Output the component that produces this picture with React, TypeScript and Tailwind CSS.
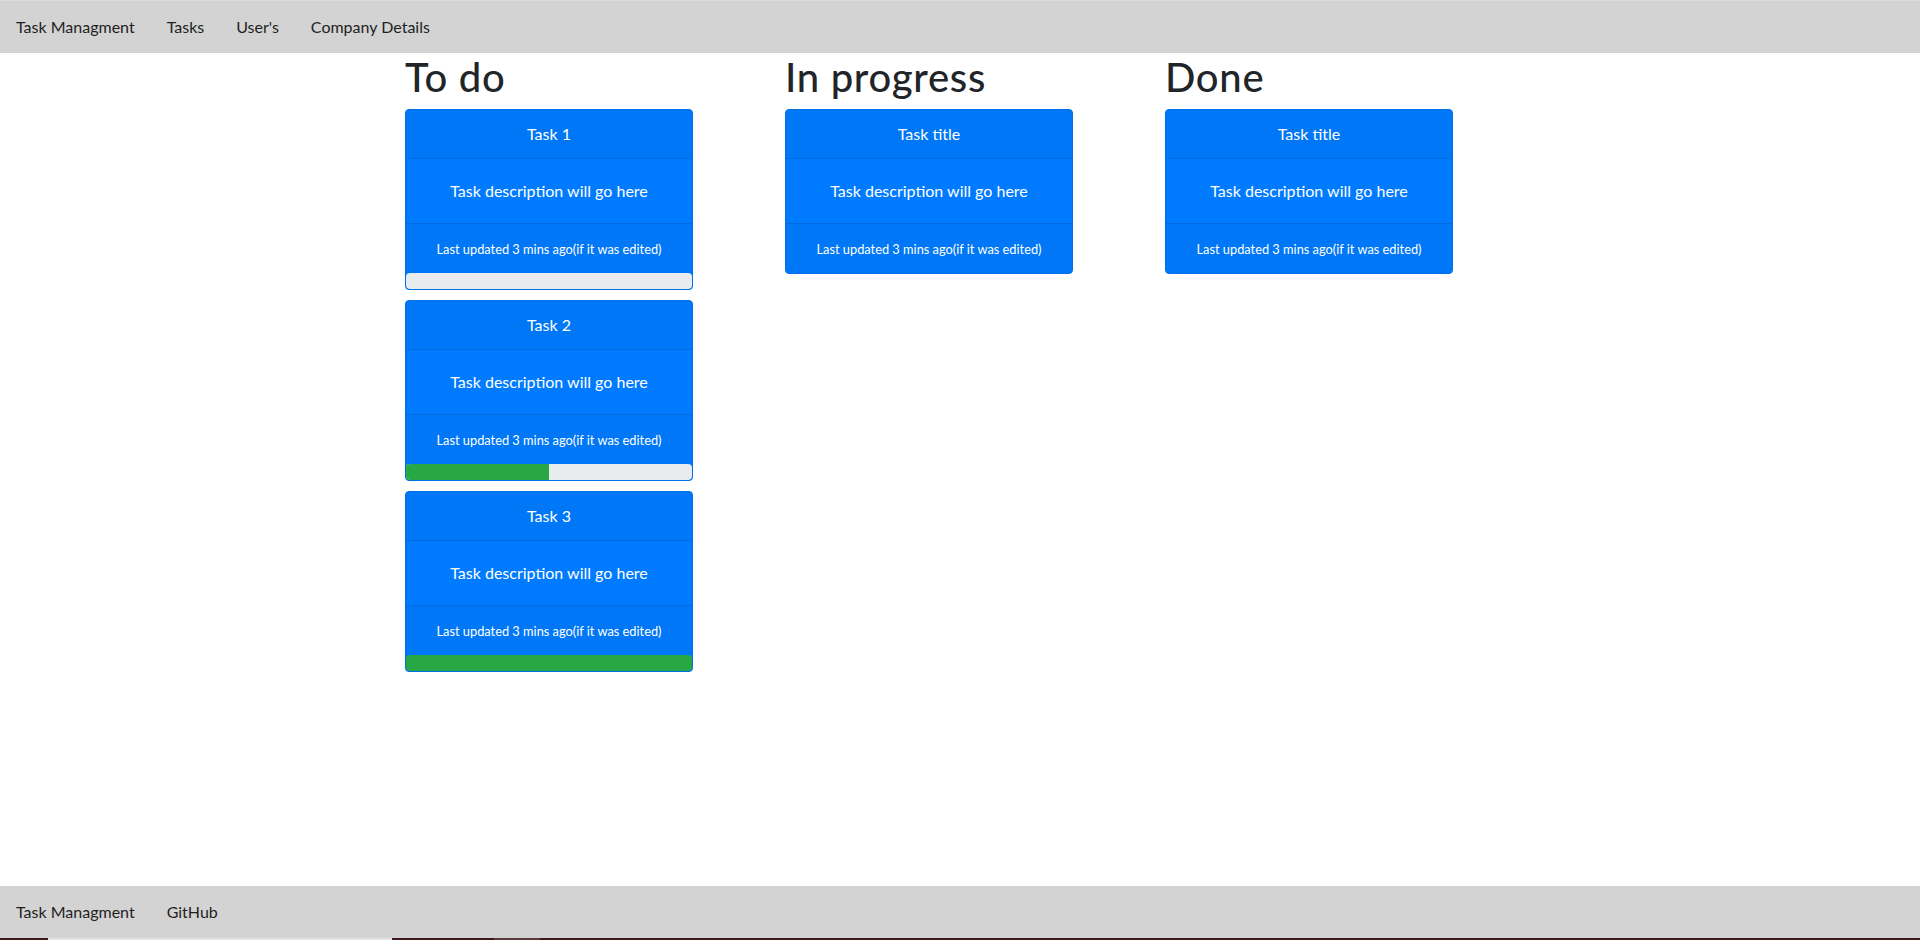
const font = { fontFamily: '"Lato", "Liberation Sans", sans-serif' };

type Task = { title: string; progress?: number };

const columns: { name: string; tasks: Task[] }[] = [
    {
        name: "To do",
        tasks: [
            { title: "Task 1", progress: 0 },
            { title: "Task 2", progress: 50 },
            { title: "Task 3", progress: 100 },
        ],
    },
    { name: "In progress", tasks: [{ title: "Task title" }] },
    { name: "Done", tasks: [{ title: "Task title" }] },
];

function TaskCard({ task }: { task: Task }) {
    return (
        <div className="w-[288px] mb-[10px] bg-[#007bff] border border-[#0070e8] rounded-[4px] text-white text-center overflow-hidden">
            <div className="bg-[#0077f7] border-b border-[#006bdf] px-5 py-3 text-[16px] leading-6">{task.title}</div>
            <div className="p-5 text-[16px] leading-6">Task description will go here</div>
            <div className="bg-[#0077f7] border-t border-[#006bdf] px-5 py-3 leading-6 text-[16px]">
                <span className="text-[12.8px]">Last updated 3 mins ago(if it was edited)</span>
            </div>
            {task.progress !== undefined && (
                <div className="h-4 bg-[#e9ecef] rounded-[4px] overflow-hidden flex">
                    <div className="h-full bg-[#28a745]" style={{ width: `${task.progress}%` }}></div>
                </div>
            )}
        </div>
    );
}

export default function App() {
    return (
        <div className="h-[940px] flex flex-col bg-white text-[#212529]" style={font}>
            <nav className="h-[53px] shrink-0 bg-[#d3d3d3] border-t border-[#dcdcdc] flex items-center gap-8 pl-4 text-[16px] text-[#1f1f1f]">
                <span>Task Managment</span>
                <span>Tasks</span>
                <span>User's</span>
                <span>Company Details</span>
            </nav>

            <main className="flex-1">
                <div className="w-[1140px] mx-auto grid grid-cols-3">
                    {columns.map((col) => (
                        <div key={col.name} className="px-[15px]">
                            <h1 className="text-[40px] leading-[48px] font-medium tracking-[0.7px] mb-2">{col.name}</h1>
                            {col.tasks.map((t, i) => (
                                <TaskCard key={i} task={t} />
                            ))}
                        </div>
                    ))}
                </div>
            </main>

            <footer className="h-[52px] shrink-0 bg-[#d3d3d3] flex items-center gap-8 pl-4 text-[16px] text-[#1f1f1f]">
                <span>Task Managment</span>
                <span>GitHub</span>
            </footer>
            <div className="h-[2px] shrink-0 flex">
                <div className="w-[48px] bg-[#3d1a1a]"></div>
                <div className="w-[344px] bg-[#e5e5e5]"></div>
                <div className="w-[102px] bg-[#3d1a1a]"></div>
                <div className="w-[46px] bg-[#5a3a3a]"></div>
                <div className="flex-1 bg-[#3d1a1a]"></div>
            </div>
        </div>
    );
}
